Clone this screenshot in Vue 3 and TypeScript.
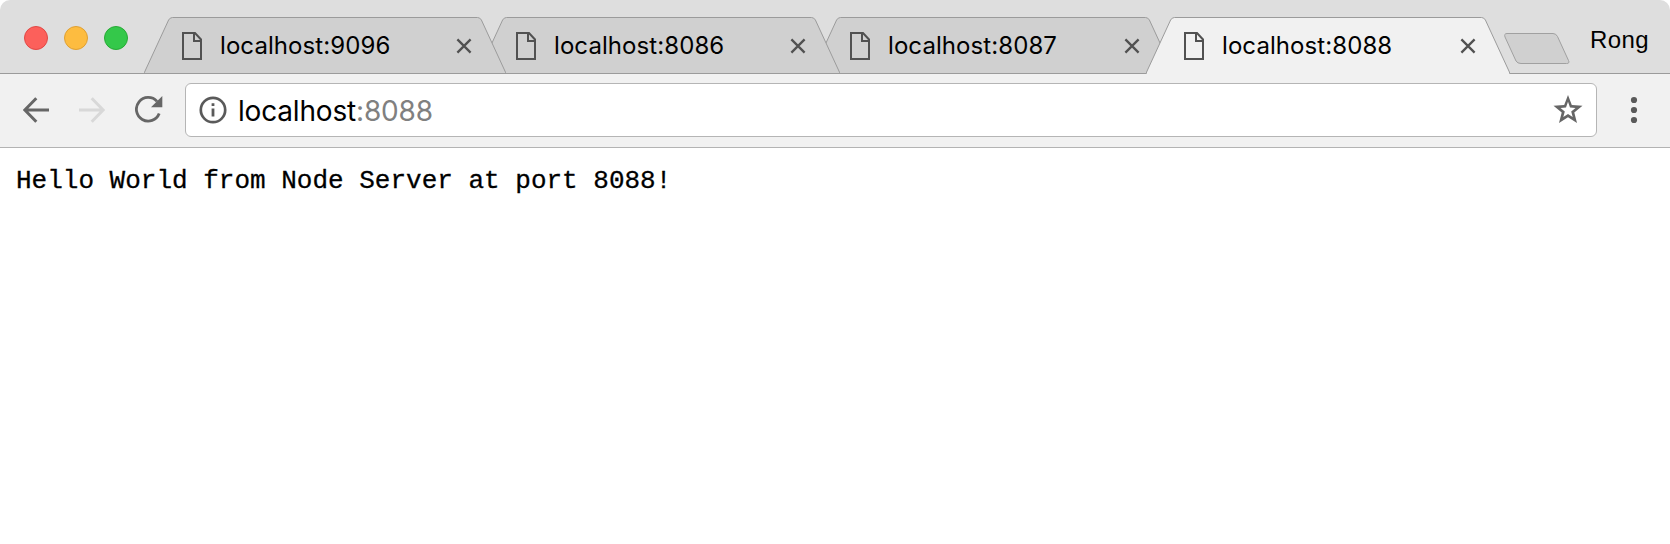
<script setup lang="ts">
interface Tab {
  title: string
  width: number
  active: boolean
}

const tabs: Tab[] = [
  { title: 'localhost:9096', width: 362, active: false },
  { title: 'localhost:8086', width: 362, active: false },
  { title: 'localhost:8087', width: 362, active: false },
  { title: 'localhost:8088', width: 364, active: true },
]

const outline = (tab: Tab): string => {
  const w = tab.width
  const foot = tab.active ? 57 : 56
  return `M0 ${foot} L0.6 55 L24.6 3 Q26 0.5 28.5 0.5 H${w - 28.5} Q${w - 26} 0.5 ${w - 24.6} 3 L${w - 0.6} 55 L${w} ${foot}`
}
</script>

<template>
  <div class="window">
    <header class="titlebar">
      <div class="lights">
        <span class="light close"></span>
        <span class="light minimize"></span>
        <span class="light maximize"></span>
      </div>
      <nav class="tabs">
        <div
          v-for="(tab, i) in tabs"
          :key="tab.title"
          class="tab"
          :class="{ active: tab.active }"
          :style="{ width: tab.width + 'px', zIndex: tab.active ? 10 : 5 - i }"
        >
          <svg class="shape" :width="tab.width" height="57" :viewBox="`0 0 ${tab.width} 57`">
            <path :d="outline(tab)" />
          </svg>
          <svg class="file" width="20" height="28" viewBox="0 0 20 28">
            <path d="M1 1H13L19 7.5V27H1Z M12 1V9H19" />
          </svg>
          <span class="title">{{ tab.title }}</span>
          <svg class="x" width="16" height="16" viewBox="0 0 16 16">
            <path d="M1.4 1.4L14.6 14.6M14.6 1.4L1.4 14.6" />
          </svg>
        </div>
      </nav>
      <svg class="newtab" width="66" height="32" viewBox="0 0 66 32">
        <path d="M3 0.5H49Q52 0.5 53.5 3.5L64.5 27.5Q66 30.5 62.5 30.5H17Q13.5 30.5 12 28L1 4Q-0.2 0.5 3 0.5Z" />
      </svg>
      <span class="user">Rong</span>
    </header>

    <div class="toolbar">
      <svg class="back" width="26" height="26" viewBox="0 0 26 26">
        <path d="M26 13H2M13.3 1.3L1.8 13L13.3 24.7" />
      </svg>
      <svg class="forward" width="26" height="26" viewBox="0 0 26 26">
        <path d="M0 13H24M12.7 1.3L24.2 13L12.7 24.7" />
      </svg>
      <svg class="reload" width="28" height="27" viewBox="0 0 28 27">
        <path class="arc" d="M22 5.4A11.8 11.8 0 1 0 24.2 17.5" />
        <path class="head" d="M27.3 0V11.3H16Z" />
      </svg>
      <div class="address">
        <svg class="info" width="28" height="28" viewBox="0 0 28 28">
          <circle cx="14" cy="14" r="12.2" />
          <path d="M12.6 7.3H15.4V10.1H12.6ZM12.6 12.4H15.4V20.5H12.6Z" />
        </svg>
        <span class="url">localhost<span class="port">:8088</span></span>
        <svg class="star" width="30" height="29" viewBox="0 0 30 29">
          <path
            fill-rule="evenodd"
            d="M15 0L18.8 10.1L29.5 10.8L21.3 17.6L24 28L15 22.2L6 28L8.7 17.6L0.5 10.8L11.2 10.1ZM15 6.8L13 12.5L7.5 12.9L11.8 16.4L10.3 22L15 19L19.7 22L18.2 16.4L22.5 12.9L17 12.5Z"
          />
        </svg>
      </div>
      <svg class="menu" width="8" height="28" viewBox="0 0 8 28">
        <circle cx="4" cy="4" r="3.1" />
        <circle cx="4" cy="14" r="3.1" />
        <circle cx="4" cy="24" r="3.1" />
      </svg>
    </div>

    <main class="page">
      <pre>Hello World from Node Server at port 8088!</pre>
    </main>
  </div>
</template>

<style>
body {
  margin: 0;
  background: #fff;
}
</style>

<style scoped>
.window {
  width: 1670px;
  height: 544px;
  overflow: hidden;
  background: #fff;
}
svg {
  display: block;
  flex: none;
}
.titlebar {
  display: flex;
  box-sizing: border-box;
  height: 74px;
  border-bottom: 1px solid #9b9b9b;
  border-radius: 10px 10px 0 0;
  background: #dedede;
}
.lights {
  display: flex;
  gap: 16px;
  padding: 26px 16px 0 24px;
}
.light {
  box-sizing: border-box;
  width: 24px;
  height: 24px;
  border: 1px solid;
  border-radius: 50%;
}
.close {
  background: #fc605b;
  border-color: #e14845;
}
.minimize {
  background: #fdbc40;
  border-color: #dfa033;
}
.maximize {
  background: #34c84a;
  border-color: #27aa35;
}
.tabs {
  display: flex;
  height: 57px;
  margin-top: 17px;
}
.tab {
  position: relative;
  display: flex;
  flex: none;
  box-sizing: border-box;
  height: 57px;
  padding: 15px 34px 0 38px;
}
.tab + .tab {
  margin-left: -28px;
}
.shape {
  position: absolute;
  left: 0;
  top: 0;
  z-index: -1;
}
.shape path {
  fill: #d0d0d0;
  stroke: #9b9b9b;
}
.active .shape path {
  fill: #f1f1f1;
}
.file path {
  fill: none;
  stroke: #515151;
  stroke-width: 2;
}
.title {
  margin-left: 18px;
  font: 24px/28px Inter, 'Liberation Sans', sans-serif;
  letter-spacing: 0.08px;
  color: #000;
}
.x {
  margin: 6px 0 0 auto;
}
.x path {
  stroke: #515151;
  stroke-width: 2.3;
}
.newtab {
  margin: 33px 0 0 -6px;
}
.newtab path {
  fill: #d0d0d0;
  stroke: #a0a0a0;
}
.user {
  margin-left: 20px;
  padding-top: 26px;
  font: 24px/28px 'Liberation Sans', Arial, sans-serif;
  letter-spacing: 0.4px;
  color: #000;
}
.toolbar {
  display: flex;
  align-items: center;
  box-sizing: border-box;
  height: 74px;
  padding: 0 32px 2px 23px;
  border-bottom: 1px solid #b3b3b3;
  background: #f1f1f1;
}
.back path,
.forward path {
  fill: none;
  stroke: #666;
  stroke-width: 3;
}
.forward {
  margin-left: 30px;
}
.forward path {
  stroke: #d8d8d8;
}
.reload {
  margin-left: 30px;
}
.arc {
  fill: none;
  stroke: #666;
  stroke-width: 2.8;
}
.head {
  fill: #666;
}
.address {
  display: flex;
  flex: 1;
  align-items: center;
  box-sizing: border-box;
  height: 54px;
  margin: 0 33px 0 22px;
  padding: 0 13px;
  border: 1px solid #b5b5b5;
  border-radius: 6px;
  background: #fff;
}
.info circle {
  fill: none;
  stroke: #5a5a5a;
  stroke-width: 2.7;
}
.info path {
  fill: #5a5a5a;
}
.url {
  margin: 2px 0 0 11px;
  font: 28px/34px Inter, 'Liberation Sans', sans-serif;
  letter-spacing: -0.18px;
  color: #000;
}
.port {
  color: #808080;
}
.star {
  margin-left: auto;
}
.star path {
  fill: #666;
}
.menu circle {
  fill: #5a5a5a;
}
.page {
  padding: 17px 16px;
}
pre {
  margin: 0;
  font: 26px/32px 'Liberation Mono', 'Courier New', monospace;
  color: #000;
  -webkit-text-stroke: 0.3px #000;
}
</style>
